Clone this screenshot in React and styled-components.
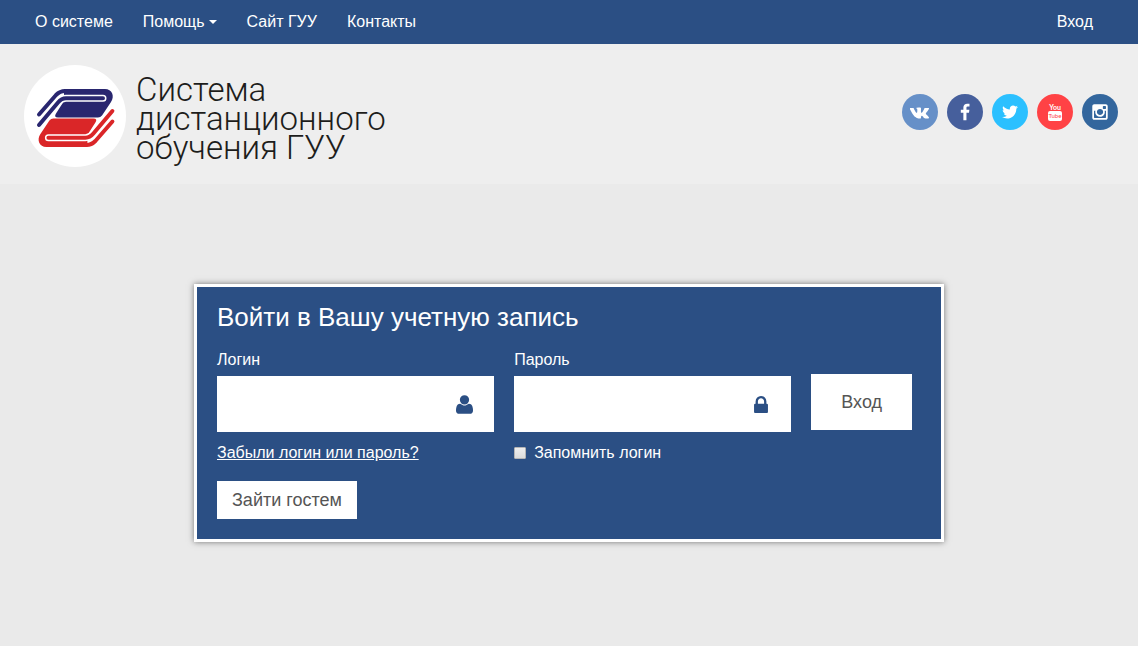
import React from 'react';
import { useState } from "react";
import styled, { createGlobalStyle } from "styled-components";


const socials = [
    { name: 'ВКонтакте', color: '#6690c8', icon: <VkIcon /> },
    { name: 'Facebook', color: '#465f9c', icon: <FacebookIcon /> },
    { name: 'Twitter', color: '#2bc0ff', icon: <TwitterIcon /> },
    { name: 'YouTube', color: '#ff4245', icon: <YoutubeIcon /> },
    { name: 'Instagram', color: '#33669d', icon: <InstagramIcon /> },
]

function App(){

    const [form, setForm] = useState({ login: '', password: '', remember: false });

    function handleChange(e){
        const { name, type, value, checked } = e.target
        setForm({ ...form, [name]: type === 'checkbox' ? checked : value })
    }

    function handleSubmit(e){
        e.preventDefault()
    }

    return (
        <Page>
            <GlobalStyle />
            <NavBar>
                <NavGroup>
                    <NavLink href="#about">О системе</NavLink>
                    <NavLink href="#help">Помощь<Caret /></NavLink>
                    <NavLink href="#site">Сайт ГУУ</NavLink>
                    <NavLink href="#contacts">Контакты</NavLink>
                </NavGroup>
                <NavGroup>
                    <NavLink href="#login">Вход</NavLink>
                </NavGroup>
            </NavBar>

            <Header>
                <Brand href="#home">
                    <Logo />
                    <BrandTitle>Система<br />дистанционного<br />обучения ГУУ</BrandTitle>
                </Brand>
                <SocialList>
                    {socials.map((social) => (
                        <SocialLink key={social.name} href="#social" aria-label={social.name} $color={social.color}>
                            {social.icon}
                        </SocialLink>
                    ))}
                </SocialList>
            </Header>

            <Main>
                <LoginCard>
                    <CardTitle>Войти в Вашу учетную запись</CardTitle>
                    <LoginForm onSubmit={handleSubmit}>
                        <Field>
                            <Label htmlFor="login">Логин</Label>
                            <InputBox>
                                <Input id="login" name="login" type="text" value={form.login} onChange={handleChange} />
                                <UserIcon />
                            </InputBox>
                            <ForgotLink href="#forgot">Забыли логин или пароль?</ForgotLink>
                        </Field>
                        <Field>
                            <Label htmlFor="password">Пароль</Label>
                            <InputBox>
                                <Input id="password" name="password" type="password" value={form.password} onChange={handleChange} />
                                <LockIcon />
                            </InputBox>
                            <Remember htmlFor="remember">
                                <Checkbox id="remember" name="remember" type="checkbox" checked={form.remember} onChange={handleChange} />
                                Запомнить логин
                            </Remember>
                        </Field>
                        <SubmitButton type="submit">Вход</SubmitButton>
                    </LoginForm>
                    <GuestButton type="button">Зайти гостем</GuestButton>
                </LoginCard>
            </Main>
        </Page>
    )
}

function Book({ color, transform }){
    return (
        <g transform={transform} fill="none" strokeWidth="4" strokeLinecap="round">
            <path fill={color} d="M40 24 H81 C88 24 91 31 87 37 L78 50.500 Q76.500 52.500 74 52.500 H34 Q29.500 52.500 32 48.500 L40 36 Z" />
            <path stroke={color} d="M15 49.500 L32 30 Q36 26 41 26 H60" />
            <path stroke="#ffffff" strokeWidth="7" d="M15 60 L34 37.500 Q37.500 33.300 42 33.300 H79" />
            <path stroke={color} d="M15 60 L34 37.500 Q37.500 33.300 42 33.300 H79" />
        </g>
    )
}

function Logo(){
    return (
        <LogoCircle>
            <svg width="102" height="102" viewBox="0 0 102 102" aria-hidden="true">
                <Book color="#29266f" />
                <Book color="#da2628" transform="rotate(180 51.700 53)" />
            </svg>
        </LogoCircle>
    )
}

function VkIcon(){
    return (
        <svg width="20" height="18" viewBox="0 0 1920 1792" fill="currentColor" aria-hidden="true">
            <path d="M1853 520q23 64-150 294-24 32-65 85-78 100-90 131-17 41 14 81 17 21 81 82h1l1 1 1 1 2 2q141 131 191 221 3 5 6.500 12.500t7 26.500-.500 34-25 27.500-59 12.500l-256 4q-24 5-56-5t-52-22l-20-12q-30-21-70-64t-68.500-77.500-61-58-56.500-15.500q-3 1-8 3.500t-17 14.500-21.500 29.500-17 52-6.500 77.500q0 15-3.500 27.500t-7.500 18.500l-4 5q-18 19-53 22h-115q-71 4-146-16.500t-131.500-53-103-66-70.500-57.500l-25-24q-10-10-27.500-30t-71.500-91-106-151-122.500-211-130.500-272q-6-16-6-27t3-16l4-6q15-19 57-19l274-2q12 2 23 6.500t16 8.500l5 3q16 11 24 32 20 50 46 103.500t41 81.500l16 29q29 60 56 104t48.500 68.500 41.500 38.500 34 14 27-5q2-1 5-5t12-22 13.500-47 9.500-81 0-125q-2-40-9-73t-14-46l-6-12q-25-34-85-43-13-2 5-24 17-19 38-30 53-26 239-24 82 1 135 13 20 5 33.500 13.500t20.500 24 10.500 32 3.500 45.500-1 55-2.500 70.500-1.500 82.500q0 11-1 42t-.500 48 3.500 40.500 11.500 39 22.500 24.500q8 2 17 4t26-11 38-34.500 52-67 68-107.500q60-104 107-225 4-10 10-17.500t11-10.500l4-3 5-2.500 13-3 20-.500 288-2q39-5 64 2.500t31 16.500z" />
        </svg>
    )
}

function FacebookIcon(){
    return (
        <svg width="18" height="18" viewBox="0 0 1792 1792" fill="currentColor" aria-hidden="true">
            <path d="M1343 76v264h-157q-86 0-116 36t-30 108v189h293l-39 296h-254v759h-306v-759h-255v-296h255v-218q0-186 104-288.500t277-102.500q147 0 228 12z" />
        </svg>
    )
}

function TwitterIcon(){
    return (
        <svg width="18" height="18" viewBox="0 0 1792 1792" fill="currentColor" aria-hidden="true">
            <path d="M1684 408q-67 98-162 167 1 14 1 42 0 130-38 259.500t-115.500 248.500-184.500 210.500-258 146-323 54.500q-271 0-496-145 35 4 78 4 225 0 401-138-105-2-188-64.500t-114-159.500q33 5 61 5 43 0 85-11-112-23-185.500-111.500t-73.500-205.500v-4q68 38 146 41-66-44-105-115t-39-154q0-88 44-163 121 149 294.500 238.500t371.500 99.500q-8-38-8-74 0-134 94.500-228.500t228.500-94.500q140 0 236 102 109-21 205-78-37 115-142 178 93-10 186-50z" />
        </svg>
    )
}

function YoutubeIcon(){
    return (
        <svg width="20" height="20" viewBox="0 0 20 20" fontFamily="Lato, sans-serif" textAnchor="middle" aria-hidden="true">
            <text x="10" y="8" fontSize="7" fontWeight="700" fill="#ffffff">You</text>
            <rect x="3" y="9" width="14" height="10" rx="2" fill="#ffffff" />
            <text x="10" y="16" fontSize="6" fill="#ff4245">Tube</text>
        </svg>
    )
}

function InstagramIcon(){
    return (
        <svg width="18" height="18" viewBox="0 0 1792 1792" fill="currentColor" aria-hidden="true">
            <path d="M1490 1426v-648h-135q20 63 20 131 0 126-64 232.500t-174 168.500-240 62q-197 0-337-135.500t-140-327.500q0-68 20-131h-141v648q0 26 17.500 43.500t43.500 17.500h1069q25 0 43-17.500t18-43.500zm-284-533q0-124-90.500-211.500t-218.500-87.500q-127 0-217.500 87.500t-90.500 211.500 90.500 211.500 217.500 87.500q128 0 218.500-87.500t90.500-211.500zm284-360v-165q0-28-20-48.500t-49-20.500h-174q-29 0-49 20.500t-20 48.500v165q0 29 20 49t49 20h174q29 0 49-20t20-49zm174-208v1142q0 81-58 139t-139 58h-1142q-81 0-139-58t-58-139v-1142q0-81 58-139t139-58h1142q81 0 139 58t58 139z" />
        </svg>
    )
}

function UserIcon(){
    return (
        <svg width="17" height="19" viewBox="0 -1408 1408 1536" fill="currentColor" aria-hidden="true">
            <path transform="scale(1 -1)" d="M1408 131q0-120-73-189.500t-194-69.500h-874q-121 0-194 69.500t-73 189.500q0 53 3.500 103.500t14 109t26.500 108.500t43 97.500t62 81t85.500 53.500t111.500 20q9 0 42-21.500t74.500-48t108-48t133.500-21.500t133.500 21.500t108 48t74.500 48t42 21.500q61 0 111.500-20t85.500-53.500t62-81t43-97.500t26.500-108.500t14-109t3.500-103.500zM1088 1024q0-159-112.500-271.500t-271.500-112.500t-271.500 112.500t-112.500 271.500t112.500 271.500t271.500 112.500t271.500-112.500t112.500-271.500z" />
        </svg>
    )
}

function LockIcon(){
    return (
        <svg width="18" height="17" viewBox="0 128 1152 1408" fill="currentColor" aria-hidden="true">
            <path d="M320 768h512v-192q0-106-75-181t-181-75-181 75-75 181v192zm832 96v576q0 40-28 68t-68 28h-960q-40 0-68-28t-28-68v-576q0-40 28-68t68-28h32v-192q0-184 132-316t316-132 316 132 132 316v192h32q40 0 68 28t28 68z" />
        </svg>
    )
}

const GlobalStyle = createGlobalStyle`
* {
box-sizing: border-box;
}
body {
margin: 0;
background: #ffffff;
font-family: "Liberation Sans", Arial, sans-serif;
font-size: 16px;
line-height: 20px;
}
`;

const Page = styled.div`
display: flex;
flex-direction: column;
min-height: 100vh;
padding-bottom: 1px;
`;

const NavBar = styled.nav`
display: flex;
justify-content: space-between;
padding: 0 30px 0 20px;
background: #2b4f84;
`;

const NavGroup = styled.div`
display: flex;
`;

const NavLink = styled.a`
display: flex;
align-items: center;
gap: 4px;
padding: 12px 15px;
color: #ffffff;
text-decoration: none;
`;

const Caret = styled.span`
border: 4px solid transparent;
border-top-color: #ffffff;
border-bottom: 0;
`;

const Header = styled.header`
display: flex;
justify-content: space-between;
align-items: flex-start;
padding: 21px 20px 17px 24px;
background: #eeeeee;
`;

const Brand = styled.a`
display: flex;
align-items: flex-start;
gap: 10px;
min-height: 102px;
color: #1d1d1b;
text-decoration: none;
`;

const LogoCircle = styled.span`
width: 102px;
height: 102px;
border-radius: 50%;
background: #ffffff;
`;

const BrandTitle = styled.span`
padding: 10px 0 5px;
font-family: Roboto, sans-serif;
font-size: 33px;
font-weight: 300;
line-height: 29px;
`;

const SocialList = styled.div`
display: flex;
gap: 9px;
padding-top: 29px;
`;

const SocialLink = styled.a`
display: flex;
align-items: center;
justify-content: center;
width: 36px;
height: 36px;
border-radius: 50%;
background: ${(props) => props.$color};
color: #ffffff;
`;

const Main = styled.main`
flex: 1;
padding: 100px 20px;
background: #eaeaea;
`;

const LoginCard = styled.section`
max-width: 750px;
margin: 0 auto;
padding: 14px 29px 20px 20px;
border: 3px solid #ffffff;
background: #2b4f84;
box-shadow: 0 0 6px rgba(0, 0, 0, 0.5);
color: #ffffff;
`;

const CardTitle = styled.h1`
margin: 0 0 17px;
font-size: 26px;
font-weight: 400;
line-height: 32px;
`;

const LoginForm = styled.form`
display: flex;
align-items: flex-start;
gap: 20px;
`;

const Field = styled.div`
flex: 1;
`;

const Label = styled.label`
display: block;
margin-bottom: 6px;
`;

const InputBox = styled.div`
display: flex;
align-items: center;
height: 56px;
margin-bottom: 11px;
padding-right: 21px;
background: #ffffff;
color: #2b4f84;
`;

const Input = styled.input`
flex: 1;
min-width: 0;
height: 56px;
padding: 0 15px;
border: 0;
outline: 0;
background: transparent;
color: #555555;
font: inherit;
`;

const ForgotLink = styled.a`
color: #ffffff;
`;

const Remember = styled.label`
display: flex;
align-items: center;
gap: 8px;
`;

const Checkbox = styled.input`
appearance: none;
width: 12px;
height: 12px;
margin: 0;
border: 1px solid #b5b5b5;
border-radius: 1px;
background: linear-gradient(#eeeeee, #dcdcdc);

&:checked {
background: #555555;
}
`;

const Button = styled.button`
border: 0;
background: #ffffff;
color: #555555;
font-family: inherit;
font-size: 18px;
line-height: 20px;
cursor: pointer;
`;

const SubmitButton = styled(Button)`
margin-top: 24px;
padding: 18px 30px;
`;

const GuestButton = styled(Button)`
margin-top: 18px;
padding: 9px 15px;
`;

export default App;
